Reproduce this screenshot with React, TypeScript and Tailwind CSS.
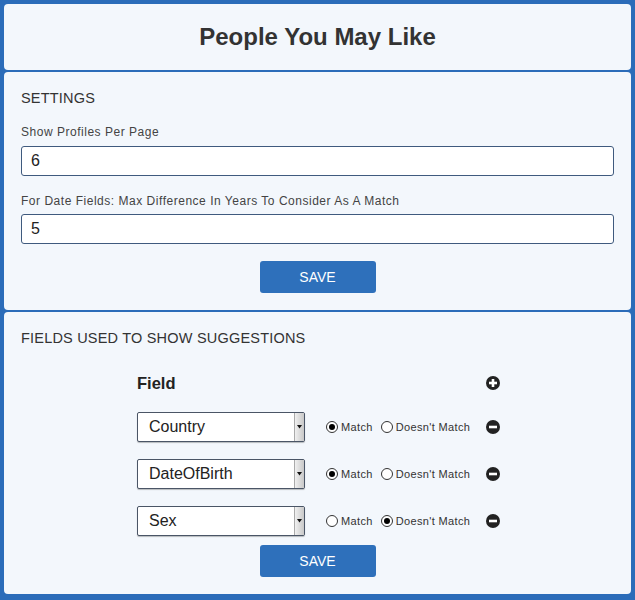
const font = { fontFamily: '"Liberation Sans", Arial, sans-serif' };

type Row = { name: string; match: boolean };

const rows: Row[] = [
  { name: 'Country', match: true },
  { name: 'DateOfBirth', match: true },
  { name: 'Sex', match: false },
];

function Radio({ checked, label }: { checked: boolean; label: string }) {
  return (
    <label className="flex items-center gap-[3px] text-[11px] tracking-[0.35px] text-[#333]">
      <span className="w-[12px] h-[12px] rounded-full border border-[#333] bg-white flex items-center justify-center">
        {checked && <span className="w-[6px] h-[6px] rounded-full bg-black" />}
      </span>
      {label}
    </label>
  );
}

function CircleIcon({ plus }: { plus?: boolean }) {
  return (
    <svg width="14" height="14" viewBox="0 0 14 14">
      <circle cx="7" cy="7" r="7" fill="#222" />
      <rect x="3" y="5.7" width="8" height="2.6" fill="#fff" />
      {plus && <rect x="5.7" y="3" width="2.6" height="8" fill="#fff" />}
    </svg>
  );
}

function Select({ value }: { value: string }) {
  return (
    <div className="w-[168px] h-[30px] flex border border-[#4a5566] rounded-[2px] bg-white shadow-[0_1px_1px_rgba(0,0,0,0.25)]">
      <div className="flex-1 flex items-center pl-[11px] text-[16px] text-[#222]">{value}</div>
      <div className="w-[10px] border-l border-[#aaa] bg-gradient-to-r from-[#f0f0f0] to-[#c8c8c8] flex items-center justify-center">
        <svg width="5" height="4" viewBox="0 0 5 4">
          <path d="M0 0 H5 L2.5 3.5 Z" fill="#111" />
        </svg>
      </div>
    </div>
  );
}

export default function App() {
  return (
    <div style={font} className="w-[635px] h-[600px] bg-[#2b6cb9] pt-[4px] px-[4px] flex flex-col gap-[2px]">
      <div className="h-[66px] bg-[#f3f7fc] rounded-[4px] flex items-center justify-center">
        <h1 className="text-[24px] font-bold text-[#333]">People You May Like</h1>
      </div>

      <div className="h-[238px] bg-[#f3f7fc] rounded-[4px] px-[17px] pt-[16px]">
        <h2 className="text-[14.5px] leading-[20px] tracking-[0.2px] text-[#333]">SETTINGS</h2>
        <p className="mt-[16px] text-[12px] leading-[16px] tracking-[0.52px] text-[#444]">Show Profiles Per Page</p>
        <div className="mt-[6px] h-[30px] border border-[#3f5a7e] rounded-[3px] bg-white flex items-center px-[9px] text-[16px] text-[#222]">6</div>
        <p className="mt-[17px] text-[12px] leading-[16px] tracking-[0.52px] text-[#444]">
          For Date Fields: Max Difference In Years To Consider As A Match
        </p>
        <div className="mt-[5px] h-[30px] border border-[#3f5a7e] rounded-[3px] bg-white flex items-center px-[9px] text-[16px] text-[#222]">5</div>
        <div className="mt-[17px] flex justify-center">
          <button className="w-[116px] h-[32px] bg-[#2e70bb] rounded-[3px] text-white text-[14px]">SAVE</button>
        </div>
      </div>

      <div className="h-[282px] bg-[#f3f7fc] rounded-[4px] px-[17px] pt-[16px]">
        <h2 className="text-[14.5px] leading-[20px] tracking-[0.2px] text-[#333]">FIELDS USED TO SHOW SUGGESTIONS</h2>
        <div className="w-[365px] ml-[116px] mt-[25px]">
          <div className="flex items-center justify-between h-[20px]">
            <span className="text-[16.5px] font-bold text-[#222]">Field</span>
            <span className="mr-[2px]">
              <CircleIcon plus />
            </span>
          </div>
          <div className="mt-[19px] flex flex-col gap-[17px]">
            {rows.map((r) => (
              <div key={r.name} className="flex items-center">
                <Select value={r.name} />
                <div className="ml-[21px] flex items-center gap-[8px]">
                  <Radio checked={r.match} label="Match" />
                  <Radio checked={!r.match} label="Doesn't Match" />
                </div>
                <span className="ml-auto mr-[2px]">
                  <CircleIcon />
                </span>
              </div>
            ))}
          </div>
        </div>
        <div className="mt-[9px] flex justify-center">
          <button className="w-[116px] h-[32px] bg-[#2e70bb] rounded-[3px] text-white text-[14px]">SAVE</button>
        </div>
      </div>
    </div>
  );
}
